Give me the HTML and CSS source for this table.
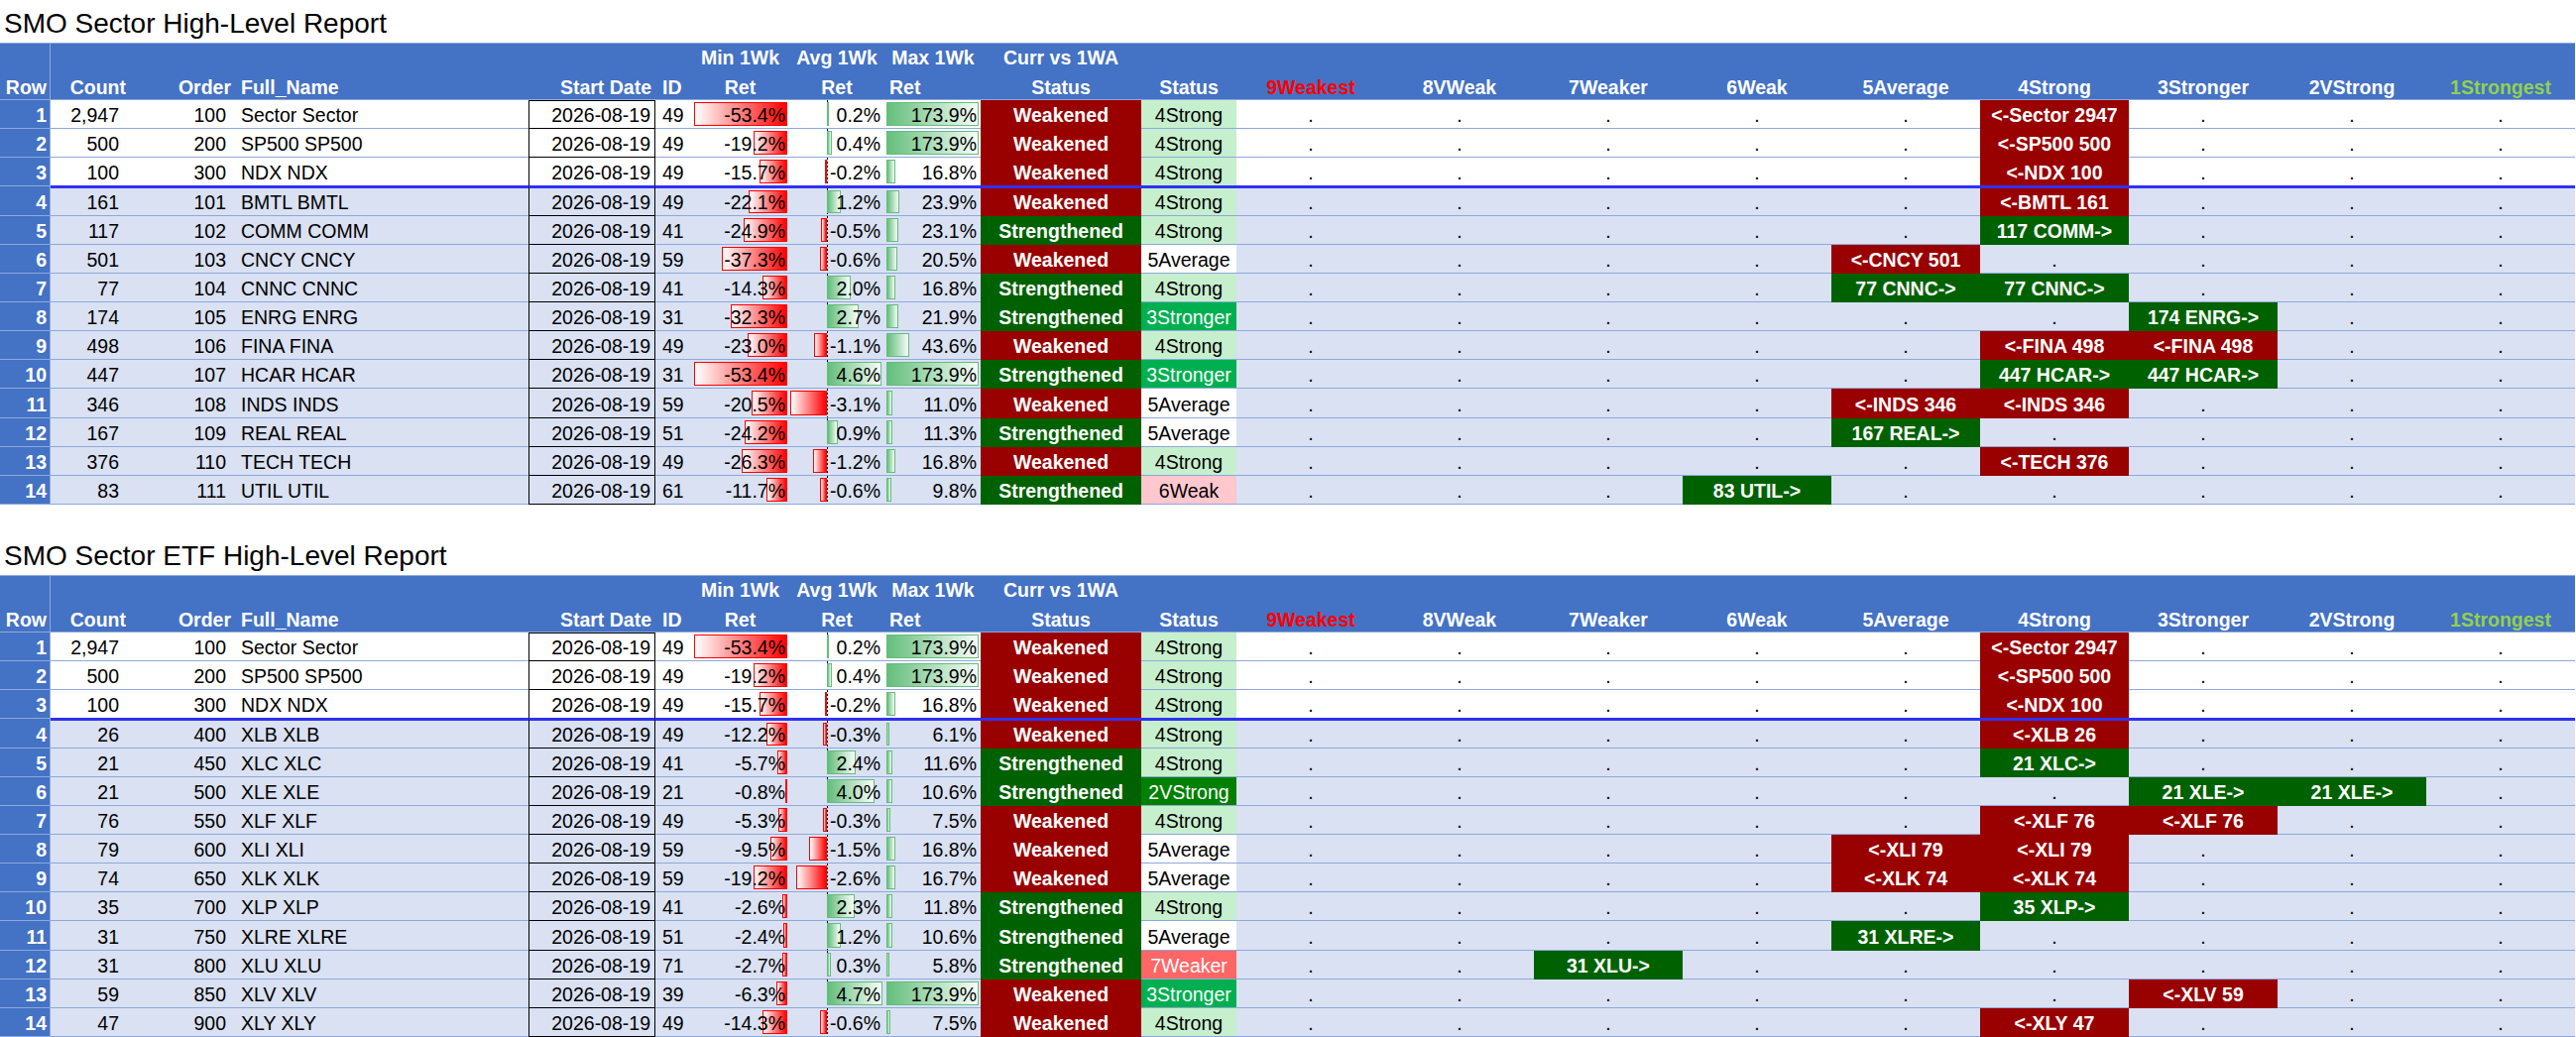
FILE: index.html
```html
<!DOCTYPE html>
<html lang="en">
<head>
<meta charset="utf-8">
<title>SMO Sector High-Level Report</title>
<link rel="stylesheet" href="styles.css">
</head>
<body>
<section class="report">
  <div class="title">SMO Sector High-Level Report</div>
  <table class="grid">
    <colgroup>
      <col class="k-rn"><col class="k-c"><col class="k-o"><col class="k-n"><col class="k-dt"><col class="k-id"><col class="k-mn"><col class="k-av"><col class="k-mx"><col class="k-cs"><col class="k-st">
      <col class="k-sg"><col class="k-sg"><col class="k-sg"><col class="k-sg"><col class="k-sg"><col class="k-sg"><col class="k-sg"><col class="k-sg"><col class="k-sg">
    </colgroup>
    <thead>
      <tr>
        <th class="rn">Row</th><th class="c">Count</th><th class="o">Order</th><th class="n">Full_Name</th><th class="dt">Start Date</th><th class="id">ID</th>
        <th class="ctr"><div class="l1">Min 1Wk</div><div>Ret</div></th>
        <th class="ctr"><div class="l1">Avg 1Wk</div><div>Ret</div></th>
        <th class="ctr"><div class="l1">Max 1Wk</div><div class="l2">Ret</div></th>
        <th class="ctr"><div class="l1">Curr vs 1WA</div><div>Status</div></th>
        <th class="ctr">Status</th>
        <th class="ctr weakest">9Weakest</th><th class="ctr">8VWeak</th><th class="ctr">7Weaker</th><th class="ctr">6Weak</th><th class="ctr">5Average</th><th class="ctr">4Strong</th><th class="ctr">3Stronger</th><th class="ctr">2VStrong</th><th class="ctr strongest">1Strongest</th>
      </tr>
    </thead>
    <tbody>
      <tr class="w"><td class="rn">1</td><td class="c">2,947</td><td class="o">100</td><td class="n">Sector Sector</td><td class="dt">2026-08-19</td><td class="id">49</td>
        <td class="mn"><span class="bar neg" style="width:94px"></span><span class="v">-53.4%</span></td>
        <td class="av"><span class="bar pos" style="width:2.4px"></span><span class="v">0.2%</span></td>
        <td class="mx"><span class="bar pos" style="width:93px"></span><span class="v">173.9%</span></td>
        <td class="wk">Weakened</td><td class="s4">4Strong</td>
        <td class="d">.</td><td class="d">.</td><td class="d">.</td><td class="d">.</td><td class="d">.</td><td class="r">&lt;-Sector 2947</td><td class="d">.</td><td class="d">.</td><td class="d">.</td></tr>
      <tr class="w"><td class="rn">2</td><td class="c">500</td><td class="o">200</td><td class="n">SP500 SP500</td><td class="dt">2026-08-19</td><td class="id">49</td>
        <td class="mn"><span class="bar neg" style="width:33.8px"></span><span class="v">-19.2%</span></td>
        <td class="av"><span class="bar pos" style="width:4.8px"></span><span class="v">0.4%</span></td>
        <td class="mx"><span class="bar pos" style="width:93px"></span><span class="v">173.9%</span></td>
        <td class="wk">Weakened</td><td class="s4">4Strong</td>
        <td class="d">.</td><td class="d">.</td><td class="d">.</td><td class="d">.</td><td class="d">.</td><td class="r">&lt;-SP500 500</td><td class="d">.</td><td class="d">.</td><td class="d">.</td></tr>
      <tr class="w sep"><td class="rn">3</td><td class="c">100</td><td class="o">300</td><td class="n">NDX NDX</td><td class="dt">2026-08-19</td><td class="id">49</td>
        <td class="mn"><span class="bar neg" style="width:27.6px"></span><span class="v">-15.7%</span></td>
        <td class="av"><span class="bar neg" style="width:2.4px"></span><span class="v">-0.2%</span></td>
        <td class="mx"><span class="bar pos" style="width:9px"></span><span class="v">16.8%</span></td>
        <td class="wk">Weakened</td><td class="s4">4Strong</td>
        <td class="d">.</td><td class="d">.</td><td class="d">.</td><td class="d">.</td><td class="d">.</td><td class="r">&lt;-NDX 100</td><td class="d">.</td><td class="d">.</td><td class="d">.</td></tr>
      <tr class="b aft"><td class="rn">4</td><td class="c">161</td><td class="o">101</td><td class="n">BMTL BMTL</td><td class="dt">2026-08-19</td><td class="id">49</td>
        <td class="mn"><span class="bar neg" style="width:38.9px"></span><span class="v">-22.1%</span></td>
        <td class="av"><span class="bar pos" style="width:14.4px"></span><span class="v">1.2%</span></td>
        <td class="mx"><span class="bar pos" style="width:12.8px"></span><span class="v">23.9%</span></td>
        <td class="wk">Weakened</td><td class="s4">4Strong</td>
        <td class="d">.</td><td class="d">.</td><td class="d">.</td><td class="d">.</td><td class="d">.</td><td class="r">&lt;-BMTL 161</td><td class="d">.</td><td class="d">.</td><td class="d">.</td></tr>
      <tr class="b"><td class="rn">5</td><td class="c">117</td><td class="o">102</td><td class="n">COMM COMM</td><td class="dt">2026-08-19</td><td class="id">41</td>
        <td class="mn"><span class="bar neg" style="width:43.8px"></span><span class="v">-24.9%</span></td>
        <td class="av"><span class="bar neg" style="width:6px"></span><span class="v">-0.5%</span></td>
        <td class="mx"><span class="bar pos" style="width:12.4px"></span><span class="v">23.1%</span></td>
        <td class="sg">Strengthened</td><td class="s4">4Strong</td>
        <td class="d">.</td><td class="d">.</td><td class="d">.</td><td class="d">.</td><td class="d">.</td><td class="g">117 COMM-&gt;</td><td class="d">.</td><td class="d">.</td><td class="d">.</td></tr>
      <tr class="b"><td class="rn">6</td><td class="c">501</td><td class="o">103</td><td class="n">CNCY CNCY</td><td class="dt">2026-08-19</td><td class="id">59</td>
        <td class="mn"><span class="bar neg" style="width:65.7px"></span><span class="v">-37.3%</span></td>
        <td class="av"><span class="bar neg" style="width:7.2px"></span><span class="v">-0.6%</span></td>
        <td class="mx"><span class="bar pos" style="width:11px"></span><span class="v">20.5%</span></td>
        <td class="wk">Weakened</td><td class="s5">5Average</td>
        <td class="d">.</td><td class="d">.</td><td class="d">.</td><td class="d">.</td><td class="r">&lt;-CNCY 501</td><td class="d">.</td><td class="d">.</td><td class="d">.</td><td class="d">.</td></tr>
      <tr class="b"><td class="rn">7</td><td class="c">77</td><td class="o">104</td><td class="n">CNNC CNNC</td><td class="dt">2026-08-19</td><td class="id">41</td>
        <td class="mn"><span class="bar neg" style="width:25.2px"></span><span class="v">-14.3%</span></td>
        <td class="av"><span class="bar pos" style="width:24px"></span><span class="v">2.0%</span></td>
        <td class="mx"><span class="bar pos" style="width:9px"></span><span class="v">16.8%</span></td>
        <td class="sg">Strengthened</td><td class="s4">4Strong</td>
        <td class="d">.</td><td class="d">.</td><td class="d">.</td><td class="d">.</td><td class="g">77 CNNC-&gt;</td><td class="g">77 CNNC-&gt;</td><td class="d">.</td><td class="d">.</td><td class="d">.</td></tr>
      <tr class="b"><td class="rn">8</td><td class="c">174</td><td class="o">105</td><td class="n">ENRG ENRG</td><td class="dt">2026-08-19</td><td class="id">31</td>
        <td class="mn"><span class="bar neg" style="width:56.9px"></span><span class="v">-32.3%</span></td>
        <td class="av"><span class="bar pos" style="width:32.4px"></span><span class="v">2.7%</span></td>
        <td class="mx"><span class="bar pos" style="width:11.7px"></span><span class="v">21.9%</span></td>
        <td class="sg">Strengthened</td><td class="s3">3Stronger</td>
        <td class="d">.</td><td class="d">.</td><td class="d">.</td><td class="d">.</td><td class="d">.</td><td class="d">.</td><td class="g">174 ENRG-&gt;</td><td class="d">.</td><td class="d">.</td></tr>
      <tr class="b"><td class="rn">9</td><td class="c">498</td><td class="o">106</td><td class="n">FINA FINA</td><td class="dt">2026-08-19</td><td class="id">49</td>
        <td class="mn"><span class="bar neg" style="width:40.5px"></span><span class="v">-23.0%</span></td>
        <td class="av"><span class="bar neg" style="width:13.2px"></span><span class="v">-1.1%</span></td>
        <td class="mx"><span class="bar pos" style="width:23.3px"></span><span class="v">43.6%</span></td>
        <td class="wk">Weakened</td><td class="s4">4Strong</td>
        <td class="d">.</td><td class="d">.</td><td class="d">.</td><td class="d">.</td><td class="d">.</td><td class="r">&lt;-FINA 498</td><td class="r">&lt;-FINA 498</td><td class="d">.</td><td class="d">.</td></tr>
      <tr class="b"><td class="rn">10</td><td class="c">447</td><td class="o">107</td><td class="n">HCAR HCAR</td><td class="dt">2026-08-19</td><td class="id">31</td>
        <td class="mn"><span class="bar neg" style="width:94px"></span><span class="v">-53.4%</span></td>
        <td class="av"><span class="bar pos" style="width:55.2px"></span><span class="v">4.6%</span></td>
        <td class="mx"><span class="bar pos" style="width:93px"></span><span class="v">173.9%</span></td>
        <td class="sg">Strengthened</td><td class="s3">3Stronger</td>
        <td class="d">.</td><td class="d">.</td><td class="d">.</td><td class="d">.</td><td class="d">.</td><td class="g">447 HCAR-&gt;</td><td class="g">447 HCAR-&gt;</td><td class="d">.</td><td class="d">.</td></tr>
      <tr class="b"><td class="rn">11</td><td class="c">346</td><td class="o">108</td><td class="n">INDS INDS</td><td class="dt">2026-08-19</td><td class="id">59</td>
        <td class="mn"><span class="bar neg" style="width:36.1px"></span><span class="v">-20.5%</span></td>
        <td class="av"><span class="bar neg" style="width:37.2px"></span><span class="v">-3.1%</span></td>
        <td class="mx"><span class="bar pos" style="width:5.9px"></span><span class="v">11.0%</span></td>
        <td class="wk">Weakened</td><td class="s5">5Average</td>
        <td class="d">.</td><td class="d">.</td><td class="d">.</td><td class="d">.</td><td class="r">&lt;-INDS 346</td><td class="r">&lt;-INDS 346</td><td class="d">.</td><td class="d">.</td><td class="d">.</td></tr>
      <tr class="b"><td class="rn">12</td><td class="c">167</td><td class="o">109</td><td class="n">REAL REAL</td><td class="dt">2026-08-19</td><td class="id">51</td>
        <td class="mn"><span class="bar neg" style="width:42.6px"></span><span class="v">-24.2%</span></td>
        <td class="av"><span class="bar pos" style="width:10.8px"></span><span class="v">0.9%</span></td>
        <td class="mx"><span class="bar pos" style="width:6px"></span><span class="v">11.3%</span></td>
        <td class="sg">Strengthened</td><td class="s5">5Average</td>
        <td class="d">.</td><td class="d">.</td><td class="d">.</td><td class="d">.</td><td class="g">167 REAL-&gt;</td><td class="d">.</td><td class="d">.</td><td class="d">.</td><td class="d">.</td></tr>
      <tr class="b"><td class="rn">13</td><td class="c">376</td><td class="o">110</td><td class="n">TECH TECH</td><td class="dt">2026-08-19</td><td class="id">49</td>
        <td class="mn"><span class="bar neg" style="width:46.3px"></span><span class="v">-26.3%</span></td>
        <td class="av"><span class="bar neg" style="width:14.4px"></span><span class="v">-1.2%</span></td>
        <td class="mx"><span class="bar pos" style="width:9px"></span><span class="v">16.8%</span></td>
        <td class="wk">Weakened</td><td class="s4">4Strong</td>
        <td class="d">.</td><td class="d">.</td><td class="d">.</td><td class="d">.</td><td class="d">.</td><td class="r">&lt;-TECH 376</td><td class="d">.</td><td class="d">.</td><td class="d">.</td></tr>
      <tr class="b"><td class="rn">14</td><td class="c">83</td><td class="o">111</td><td class="n">UTIL UTIL</td><td class="dt">2026-08-19</td><td class="id">61</td>
        <td class="mn"><span class="bar neg" style="width:20.6px"></span><span class="v">-11.7%</span></td>
        <td class="av"><span class="bar neg" style="width:7.2px"></span><span class="v">-0.6%</span></td>
        <td class="mx"><span class="bar pos" style="width:5.2px"></span><span class="v">9.8%</span></td>
        <td class="sg">Strengthened</td><td class="s6">6Weak</td>
        <td class="d">.</td><td class="d">.</td><td class="d">.</td><td class="g">83 UTIL-&gt;</td><td class="d">.</td><td class="d">.</td><td class="d">.</td><td class="d">.</td><td class="d">.</td></tr>
    </tbody>
  </table>
</section>

<div class="spacer"></div>

<section class="report">
  <div class="title">SMO Sector ETF High-Level Report</div>
  <table class="grid">
    <colgroup>
      <col class="k-rn"><col class="k-c"><col class="k-o"><col class="k-n"><col class="k-dt"><col class="k-id"><col class="k-mn"><col class="k-av"><col class="k-mx"><col class="k-cs"><col class="k-st">
      <col class="k-sg"><col class="k-sg"><col class="k-sg"><col class="k-sg"><col class="k-sg"><col class="k-sg"><col class="k-sg"><col class="k-sg"><col class="k-sg">
    </colgroup>
    <thead>
      <tr>
        <th class="rn">Row</th><th class="c">Count</th><th class="o">Order</th><th class="n">Full_Name</th><th class="dt">Start Date</th><th class="id">ID</th>
        <th class="ctr"><div class="l1">Min 1Wk</div><div>Ret</div></th>
        <th class="ctr"><div class="l1">Avg 1Wk</div><div>Ret</div></th>
        <th class="ctr"><div class="l1">Max 1Wk</div><div class="l2">Ret</div></th>
        <th class="ctr"><div class="l1">Curr vs 1WA</div><div>Status</div></th>
        <th class="ctr">Status</th>
        <th class="ctr weakest">9Weakest</th><th class="ctr">8VWeak</th><th class="ctr">7Weaker</th><th class="ctr">6Weak</th><th class="ctr">5Average</th><th class="ctr">4Strong</th><th class="ctr">3Stronger</th><th class="ctr">2VStrong</th><th class="ctr strongest">1Strongest</th>
      </tr>
    </thead>
    <tbody>
      <tr class="w"><td class="rn">1</td><td class="c">2,947</td><td class="o">100</td><td class="n">Sector Sector</td><td class="dt">2026-08-19</td><td class="id">49</td>
        <td class="mn"><span class="bar neg" style="width:94px"></span><span class="v">-53.4%</span></td>
        <td class="av"><span class="bar pos" style="width:2.4px"></span><span class="v">0.2%</span></td>
        <td class="mx"><span class="bar pos" style="width:93px"></span><span class="v">173.9%</span></td>
        <td class="wk">Weakened</td><td class="s4">4Strong</td>
        <td class="d">.</td><td class="d">.</td><td class="d">.</td><td class="d">.</td><td class="d">.</td><td class="r">&lt;-Sector 2947</td><td class="d">.</td><td class="d">.</td><td class="d">.</td></tr>
      <tr class="w"><td class="rn">2</td><td class="c">500</td><td class="o">200</td><td class="n">SP500 SP500</td><td class="dt">2026-08-19</td><td class="id">49</td>
        <td class="mn"><span class="bar neg" style="width:33.8px"></span><span class="v">-19.2%</span></td>
        <td class="av"><span class="bar pos" style="width:4.8px"></span><span class="v">0.4%</span></td>
        <td class="mx"><span class="bar pos" style="width:93px"></span><span class="v">173.9%</span></td>
        <td class="wk">Weakened</td><td class="s4">4Strong</td>
        <td class="d">.</td><td class="d">.</td><td class="d">.</td><td class="d">.</td><td class="d">.</td><td class="r">&lt;-SP500 500</td><td class="d">.</td><td class="d">.</td><td class="d">.</td></tr>
      <tr class="w sep"><td class="rn">3</td><td class="c">100</td><td class="o">300</td><td class="n">NDX NDX</td><td class="dt">2026-08-19</td><td class="id">49</td>
        <td class="mn"><span class="bar neg" style="width:27.6px"></span><span class="v">-15.7%</span></td>
        <td class="av"><span class="bar neg" style="width:2.4px"></span><span class="v">-0.2%</span></td>
        <td class="mx"><span class="bar pos" style="width:9px"></span><span class="v">16.8%</span></td>
        <td class="wk">Weakened</td><td class="s4">4Strong</td>
        <td class="d">.</td><td class="d">.</td><td class="d">.</td><td class="d">.</td><td class="d">.</td><td class="r">&lt;-NDX 100</td><td class="d">.</td><td class="d">.</td><td class="d">.</td></tr>
      <tr class="b aft"><td class="rn">4</td><td class="c">26</td><td class="o">400</td><td class="n">XLB XLB</td><td class="dt">2026-08-19</td><td class="id">49</td>
        <td class="mn"><span class="bar neg" style="width:21.5px"></span><span class="v">-12.2%</span></td>
        <td class="av"><span class="bar neg" style="width:3.6px"></span><span class="v">-0.3%</span></td>
        <td class="mx"><span class="bar pos" style="width:3.3px"></span><span class="v">6.1%</span></td>
        <td class="wk">Weakened</td><td class="s4">4Strong</td>
        <td class="d">.</td><td class="d">.</td><td class="d">.</td><td class="d">.</td><td class="d">.</td><td class="r">&lt;-XLB 26</td><td class="d">.</td><td class="d">.</td><td class="d">.</td></tr>
      <tr class="b"><td class="rn">5</td><td class="c">21</td><td class="o">450</td><td class="n">XLC XLC</td><td class="dt">2026-08-19</td><td class="id">41</td>
        <td class="mn"><span class="bar neg" style="width:10px"></span><span class="v">-5.7%</span></td>
        <td class="av"><span class="bar pos" style="width:28.8px"></span><span class="v">2.4%</span></td>
        <td class="mx"><span class="bar pos" style="width:6.2px"></span><span class="v">11.6%</span></td>
        <td class="sg">Strengthened</td><td class="s4">4Strong</td>
        <td class="d">.</td><td class="d">.</td><td class="d">.</td><td class="d">.</td><td class="d">.</td><td class="g">21 XLC-&gt;</td><td class="d">.</td><td class="d">.</td><td class="d">.</td></tr>
      <tr class="b"><td class="rn">6</td><td class="c">21</td><td class="o">500</td><td class="n">XLE XLE</td><td class="dt">2026-08-19</td><td class="id">21</td>
        <td class="mn"><span class="bar neg" style="width:1.4px"></span><span class="v">-0.8%</span></td>
        <td class="av"><span class="bar pos" style="width:48px"></span><span class="v">4.0%</span></td>
        <td class="mx"><span class="bar pos" style="width:5.7px"></span><span class="v">10.6%</span></td>
        <td class="sg">Strengthened</td><td class="s2">2VStrong</td>
        <td class="d">.</td><td class="d">.</td><td class="d">.</td><td class="d">.</td><td class="d">.</td><td class="d">.</td><td class="g">21 XLE-&gt;</td><td class="g">21 XLE-&gt;</td><td class="d">.</td></tr>
      <tr class="b"><td class="rn">7</td><td class="c">76</td><td class="o">550</td><td class="n">XLF XLF</td><td class="dt">2026-08-19</td><td class="id">49</td>
        <td class="mn"><span class="bar neg" style="width:9.3px"></span><span class="v">-5.3%</span></td>
        <td class="av"><span class="bar neg" style="width:3.6px"></span><span class="v">-0.3%</span></td>
        <td class="mx"><span class="bar pos" style="width:4px"></span><span class="v">7.5%</span></td>
        <td class="wk">Weakened</td><td class="s4">4Strong</td>
        <td class="d">.</td><td class="d">.</td><td class="d">.</td><td class="d">.</td><td class="d">.</td><td class="r">&lt;-XLF 76</td><td class="r">&lt;-XLF 76</td><td class="d">.</td><td class="d">.</td></tr>
      <tr class="b"><td class="rn">8</td><td class="c">79</td><td class="o">600</td><td class="n">XLI XLI</td><td class="dt">2026-08-19</td><td class="id">59</td>
        <td class="mn"><span class="bar neg" style="width:16.7px"></span><span class="v">-9.5%</span></td>
        <td class="av"><span class="bar neg" style="width:18px"></span><span class="v">-1.5%</span></td>
        <td class="mx"><span class="bar pos" style="width:9px"></span><span class="v">16.8%</span></td>
        <td class="wk">Weakened</td><td class="s5">5Average</td>
        <td class="d">.</td><td class="d">.</td><td class="d">.</td><td class="d">.</td><td class="r">&lt;-XLI 79</td><td class="r">&lt;-XLI 79</td><td class="d">.</td><td class="d">.</td><td class="d">.</td></tr>
      <tr class="b"><td class="rn">9</td><td class="c">74</td><td class="o">650</td><td class="n">XLK XLK</td><td class="dt">2026-08-19</td><td class="id">59</td>
        <td class="mn"><span class="bar neg" style="width:33.8px"></span><span class="v">-19.2%</span></td>
        <td class="av"><span class="bar neg" style="width:31.2px"></span><span class="v">-2.6%</span></td>
        <td class="mx"><span class="bar pos" style="width:8.9px"></span><span class="v">16.7%</span></td>
        <td class="wk">Weakened</td><td class="s5">5Average</td>
        <td class="d">.</td><td class="d">.</td><td class="d">.</td><td class="d">.</td><td class="r">&lt;-XLK 74</td><td class="r">&lt;-XLK 74</td><td class="d">.</td><td class="d">.</td><td class="d">.</td></tr>
      <tr class="b"><td class="rn">10</td><td class="c">35</td><td class="o">700</td><td class="n">XLP XLP</td><td class="dt">2026-08-19</td><td class="id">41</td>
        <td class="mn"><span class="bar neg" style="width:4.6px"></span><span class="v">-2.6%</span></td>
        <td class="av"><span class="bar pos" style="width:27.6px"></span><span class="v">2.3%</span></td>
        <td class="mx"><span class="bar pos" style="width:6.3px"></span><span class="v">11.8%</span></td>
        <td class="sg">Strengthened</td><td class="s4">4Strong</td>
        <td class="d">.</td><td class="d">.</td><td class="d">.</td><td class="d">.</td><td class="d">.</td><td class="g">35 XLP-&gt;</td><td class="d">.</td><td class="d">.</td><td class="d">.</td></tr>
      <tr class="b"><td class="rn">11</td><td class="c">31</td><td class="o">750</td><td class="n">XLRE XLRE</td><td class="dt">2026-08-19</td><td class="id">51</td>
        <td class="mn"><span class="bar neg" style="width:4.2px"></span><span class="v">-2.4%</span></td>
        <td class="av"><span class="bar pos" style="width:14.4px"></span><span class="v">1.2%</span></td>
        <td class="mx"><span class="bar pos" style="width:5.7px"></span><span class="v">10.6%</span></td>
        <td class="sg">Strengthened</td><td class="s5">5Average</td>
        <td class="d">.</td><td class="d">.</td><td class="d">.</td><td class="d">.</td><td class="g">31 XLRE-&gt;</td><td class="d">.</td><td class="d">.</td><td class="d">.</td><td class="d">.</td></tr>
      <tr class="b"><td class="rn">12</td><td class="c">31</td><td class="o">800</td><td class="n">XLU XLU</td><td class="dt">2026-08-19</td><td class="id">71</td>
        <td class="mn"><span class="bar neg" style="width:4.8px"></span><span class="v">-2.7%</span></td>
        <td class="av"><span class="bar pos" style="width:3.6px"></span><span class="v">0.3%</span></td>
        <td class="mx"><span class="bar pos" style="width:3.1px"></span><span class="v">5.8%</span></td>
        <td class="sg">Strengthened</td><td class="s7">7Weaker</td>
        <td class="d">.</td><td class="d">.</td><td class="g">31 XLU-&gt;</td><td class="d">.</td><td class="d">.</td><td class="d">.</td><td class="d">.</td><td class="d">.</td><td class="d">.</td></tr>
      <tr class="b"><td class="rn">13</td><td class="c">59</td><td class="o">850</td><td class="n">XLV XLV</td><td class="dt">2026-08-19</td><td class="id">39</td>
        <td class="mn"><span class="bar neg" style="width:11.1px"></span><span class="v">-6.3%</span></td>
        <td class="av"><span class="bar pos" style="width:56.4px"></span><span class="v">4.7%</span></td>
        <td class="mx"><span class="bar pos" style="width:93px"></span><span class="v">173.9%</span></td>
        <td class="wk">Weakened</td><td class="s3">3Stronger</td>
        <td class="d">.</td><td class="d">.</td><td class="d">.</td><td class="d">.</td><td class="d">.</td><td class="d">.</td><td class="r">&lt;-XLV 59</td><td class="d">.</td><td class="d">.</td></tr>
      <tr class="b"><td class="rn">14</td><td class="c">47</td><td class="o">900</td><td class="n">XLY XLY</td><td class="dt">2026-08-19</td><td class="id">49</td>
        <td class="mn"><span class="bar neg" style="width:25.2px"></span><span class="v">-14.3%</span></td>
        <td class="av"><span class="bar neg" style="width:7.2px"></span><span class="v">-0.6%</span></td>
        <td class="mx"><span class="bar pos" style="width:4px"></span><span class="v">7.5%</span></td>
        <td class="wk">Weakened</td><td class="s4">4Strong</td>
        <td class="d">.</td><td class="d">.</td><td class="d">.</td><td class="d">.</td><td class="d">.</td><td class="r">&lt;-XLY 47</td><td class="d">.</td><td class="d">.</td><td class="d">.</td></tr>
    </tbody>
  </table>
</section>
</body>
</html>
```

FILE: styles.css
```css
* { box-sizing: border-box; }

html, body { margin: 0; padding: 0; background: #ffffff; }

body {
  font-family: "Liberation Sans", Arial, sans-serif;
  font-size: 19.5px;
  color: #000000;
  width: 2598px;
  overflow: hidden;
}

.report { width: 2597px; }

.title {
  height: 43px;
  padding: 7px 0 0 4px;
  font-size: 28px;
  line-height: 34px;
  color: #000000;
  white-space: nowrap;
}

.spacer { height: 28px; }

/* ---------- table grid ---------- */
.grid {
  width: 2597px;
  table-layout: fixed;
  border-collapse: separate;
  border-spacing: 0;
}

.k-rn { width: 51px; }
.k-c  { width: 77px; }
.k-o  { width: 107px; }
.k-n  { width: 298px; }
.k-dt { width: 128px; }
.k-id { width: 37px; }
.k-mn { width: 97px; }
.k-av { width: 98px; }
.k-mx { width: 96px; }
.k-cs { width: 162px; }
.k-st { width: 96px; }
.k-sg { width: 150px; }

/* header */
.grid thead tr { height: 57px; }

.grid th {
  background: #4472C4;
  color: #ffffff;
  font-weight: bold;
  vertical-align: bottom;
  padding: 0;
  line-height: 24px;
  border-top: 1px solid #8EA9DB;
  border-bottom: 1px solid #8EA9DB;
  white-space: nowrap;
  overflow: hidden;
}

.grid th .l1 { line-height: 29px; padding-bottom: 3px; }
.grid th .l2 { text-align: left; padding-left: 4px; }

.grid th.ctr { text-align: center; }
.grid th.weakest { color: #FF0000; }
.grid th.strongest { color: #92D050; }

/* body rows */
.grid tbody tr { height: 29.15px; }
.grid tr.w { background: #ffffff; }
.grid tr.b { background: #D9E1F2; }

.grid td {
  padding: 0;
  line-height: 25px;
  vertical-align: bottom;
  border-bottom: 1px solid #8EA9DB;
  white-space: nowrap;
  overflow: hidden;
  position: relative;
}

/* column kinds (shared by th and td) */
.grid .rn {
  background: #4472C4;
  color: #ffffff;
  font-weight: bold;
  text-align: right;
  padding-right: 3px;
  border-right: 1px solid #8EA9DB;
}
.grid .c  { text-align: right; padding-right: 8px; }
.grid th.c { padding-right: 1px; }
.grid .o  { text-align: right; padding-right: 7px; }
.grid th.o { padding-right: 2px; }
.grid .n  { text-align: left; padding-left: 8px; }
.grid .dt { text-align: right; padding-right: 4px; }
.grid .id { text-align: left; padding-left: 7px; }

.grid td.dt {
  border-left: 1px solid #000000;
  border-right: 1px solid #000000;
  border-bottom-color: #000000;
}
.grid tbody tr:first-child td.dt { border-top: 1px solid #000000; }

.grid td.mn { text-align: right; padding-right: 3px; }
.grid td.mx { text-align: right; padding-right: 4px; }
.grid td.av {
  text-align: right;
  padding-right: 5px;
  background-image: repeating-linear-gradient(to bottom, #000000 0 2px, transparent 2px 4px);
  background-size: 1px 100%;
  background-repeat: no-repeat;
  background-position: 39px 0;
}

/* data bars */
.bar {
  position: absolute;
  top: 2px;
  bottom: 2px;
}
.bar.neg {
  background: linear-gradient(to right, #ffffff, #FF0000);
  border: 1px solid #FF0000;
}
.bar.pos {
  background: linear-gradient(to right, #63BE7B, #F7FCF8);
  border: 1px solid #63BE7B;
}
.mn .bar { right: 1px; }
.mx .bar { left: 1px; }
.av .bar.pos { left: 39px; }
.av .bar.neg { right: 59px; }
.v { position: relative; }

/* current status */
.grid td.wk,
.grid td.sg,
.grid td.r,
.grid td.g {
  color: #ffffff;
  font-weight: bold;
  text-align: center;
}
.grid td.wk, .grid td.r { background: #990000; border-bottom-color: #990000; }
.grid td.sg, .grid td.g { background: #006100; border-bottom-color: #006100; }

/* status levels */
.grid td.s2, .grid td.s3, .grid td.s4, .grid td.s5, .grid td.s6, .grid td.s7 { text-align: center; }
.grid td.s2 { background: #008000; color: #ffffff; }
.grid td.s3 { background: #00B050; color: #ffffff; }
.grid td.s4 { background: #C6EFCE; }
.grid td.s5 { background: #ffffff; }
.grid td.s6 { background: #FFC7CE; }
.grid td.s7 { background: #FF6666; color: #ffffff; }

.grid td.d { text-align: center; }

/* separator between index rows and sector rows */
.grid tr.sep td { border-bottom-color: #3131F2; }
.grid tr.sep td.rn { border-bottom-color: #8EA9DB; }
.grid tr.aft td { border-top: 2px solid #3131F2; }
.grid tr.aft td.rn { border-top: 0; }
```
